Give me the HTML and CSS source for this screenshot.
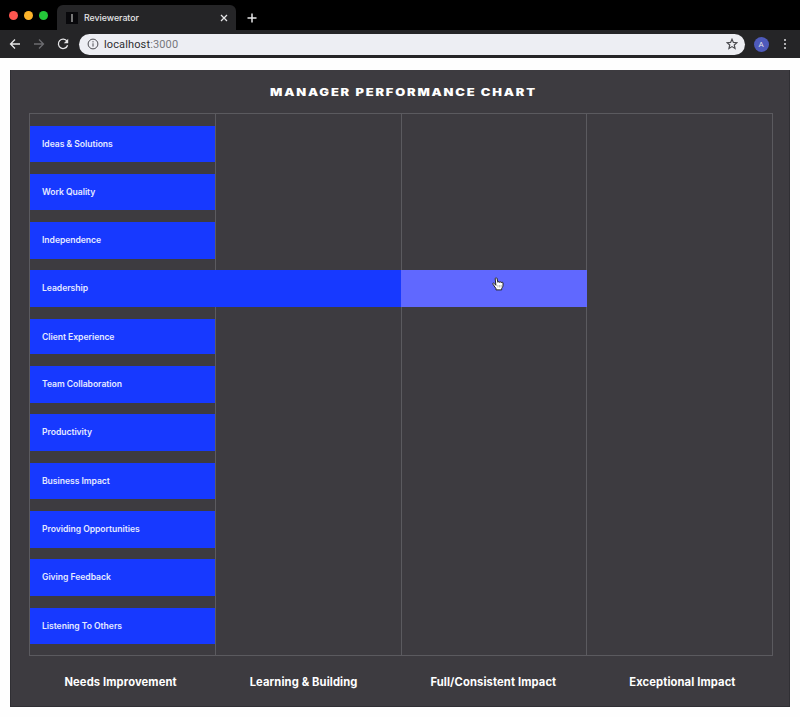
FILE: index.html
```html
<!DOCTYPE html>
<html lang="en">
<head>
<meta charset="utf-8">
<title>Reviewerator</title>
<link rel="stylesheet" href="styles.css">
</head>
<body>
<header class="browser">
  <div class="tab-strip">
    <div class="lights"><i class="light red"></i><i class="light amber"></i><i class="light green"></i></div>
    <div class="tab">
      <span class="favicon"></span>
      <span class="tab-title">Reviewerator</span>
      <svg class="close" viewBox="0 0 8 8"><path d="M1 1l6 6M7 1L1 7"/></svg>
    </div>
    <svg class="new-tab" viewBox="0 0 10 10"><path d="M5 .5v9M.5 5h9"/></svg>
  </div>
  <div class="toolbar">
    <svg class="nav" viewBox="0 0 12 12"><path d="M11 6H1.5M6 1.5L1.5 6 6 10.500"/></svg>
    <svg class="nav disabled" viewBox="0 0 12 12"><path d="M1 6h9.500M6 1.500L10.500 6 6 10.500"/></svg>
    <svg class="nav" viewBox="0 0 12 12"><path d="M10 3.200A4.700 4.700 0 1 0 10.600 7.200"/><path class="solid" d="M11.200.8v4.400H6.800z"/></svg>
    <div class="address">
      <svg class="info" viewBox="0 0 12 12"><circle cx="6" cy="6" r="4.900"/><path d="M6 5.300v3.300M6 3.200v1.200"/></svg>
      <span class="url">localhost<span class="port">:3000</span></span>
      <svg class="star" viewBox="0 0 12 12"><path d="M6 1.200l1.400 3.200 3.500.3-2.650 2.300.8 3.400L6 8.600l-3.050 1.800.8-3.400L1.100 4.700l3.500-.3z"/></svg>
    </div>
    <span class="avatar">A</span>
    <span class="menu"><i></i><i></i><i></i></span>
  </div>
</header>
<main class="panel">
  <h1 class="title"><span>MANAGER PERFORMANCE CHART</span></h1>
  <section class="chart">
    <div class="row"><div class="bar">Ideas &amp; Solutions</div></div>
    <div class="row"><div class="bar">Work Quality</div></div>
    <div class="row tall"><div class="bar">Independence</div></div>
    <div class="row tall"><div class="bar wide">Leadership</div><div class="bar hover"><svg class="cursor" viewBox="0 0 12 14"><path d="M3.900 8.300L2.400 6.600C1.300 5.500.2 6.300 1 7.300l3 4.300v1.300h5.700v-1.400c1-1.300 1.300-2.400 1.300-3.600V6c0-1-1.300-1-1.500-.2 0-1.200-1.500-1.200-1.800-.4-.2-1-1.600-1-1.800-.1L5 1.500C4.700.4 3 .7 3.200 1.900z"/><path class="creases" d="M5.900 8v2.500M7.600 8v2.500M9.200 8v2.500"/></svg></div></div>
    <div class="row short"><div class="bar">Client Experience</div></div>
    <div class="row tall"><div class="bar">Team Collaboration</div></div>
    <div class="row tall"><div class="bar">Productivity</div></div>
    <div class="row"><div class="bar">Business Impact</div></div>
    <div class="row tall"><div class="bar">Providing Opportunities</div></div>
    <div class="row tall"><div class="bar">Giving Feedback</div></div>
    <div class="row"><div class="bar">Listening To Others</div></div>
  </section>
  <footer class="levels">
    <span>Needs Improvement</span><span>Learning &amp; Building</span><span>Full/Consistent Impact</span><span>Exceptional Impact</span>
  </footer>
</main>
</body>
</html>
```
FILE: styles.css
```css
* { box-sizing: border-box; }
body { margin: 0; background: #fefefe; font-family: Inter, "Liberation Sans", sans-serif; }
svg { display: block; flex: none; fill: none; stroke: currentColor; }

.browser { height: 58px; background: #000; color: #e6e6e8; }
.tab-strip { display: flex; height: 30px; align-items: flex-end; }
.lights { display: flex; gap: 5.500px; width: 57px; height: 30px; padding: 10.500px 0 0 8.500px; }
.light { width: 9.500px; height: 9.500px; border-radius: 50%; }
.red { background: #fc5650; }
.amber { background: #fdb32a; }
.green { background: #24c839; }
.tab { display: flex; align-items: center; width: 179px; height: 25px; padding: 0 8px 0 9px; border-radius: 6px 6px 0 0; background: #252527; }
.favicon { width: 12px; height: 12px; margin-right: 6px; padding: 2px 5px; background: #08080b; }
.favicon::before { content: ""; display: block; width: 2px; height: 8px; background: #777; }
.tab-title { flex: 1; font-size: 8.800px; font-weight: 500; letter-spacing: -.02px; }
.close { width: 8px; height: 8px; stroke-width: 1.300; }
.new-tab { width: 10px; height: 10px; margin: 0 0 7px 11px; stroke-width: 1.500; }
.toolbar { display: flex; align-items: center; height: 28px; padding-left: 9px; background: #252527; }
.nav { width: 12px; height: 12px; margin-right: 12px; stroke-width: 1.300; }
.nav:nth-child(3) { margin-right: 10px; }
.disabled { color: #6c6c70; }
.solid { fill: currentColor; stroke: none; }
.address { display: flex; align-items: center; width: 666px; height: 21px; padding: 0 7px 0 8px; border-radius: 11px; background: #edeef3; color: #4b4b50; }
.info { width: 12px; height: 12px; margin-right: 5px; }
.url { flex: 1; font-family: Roboto, sans-serif; font-size: 11px; letter-spacing: .13px; color: #2d2d31; }
.port { color: #77777c; }
.star { width: 12px; height: 12px; stroke-width: 1.200; }
.avatar { width: 15px; height: 15px; margin-left: 8.500px; border-radius: 50%; background: #4e5abb; font: 8px/15px Roboto, sans-serif; text-align: center; }
.menu { display: grid; gap: 2px; margin-left: 15px; }
.menu i { width: 2px; height: 2px; border-radius: 1px; background: #dedee0; }

.panel { width: 780px; height: 637px; margin: 12px 0 0 10px; padding: 0 17px 0 19px; border: 1px solid #302f34; border-top: 0; background: #3d3b40; color: #fff; }
.title { height: 43px; margin: 0; padding-left: 4px; font-size: 10px; line-height: 45px; font-weight: 900; text-align: center; }
.title span { display: inline-block; letter-spacing: 1.400px; transform: scaleX(1.290); }
.chart { display: grid; grid-template-rows: 48px 48px 48px 49px 47px 48px 49px 48px 48px 49px 36px; width: 744px; height: 543px; margin-left: -1px; padding: 12px 0; border: 1px solid #5b5a5f; background: linear-gradient(90deg, transparent 185px, #5b5a5f 185px 186px, transparent 186px 371px, #5b5a5f 371px 372px, transparent 372px 556px, #5b5a5f 556px 557px, transparent 557px); }
.row { display: flex; height: 36px; }
.row.tall { height: 37px; }
.row.short { height: 35px; }
.row.short .bar { padding-bottom: 0; }
.bar { width: 185px; padding: 0 0 1px 12px; display: flex; align-items: center; background: #1739ff; color: #e5eaff; font-size: 8.600px; font-weight: 600; letter-spacing: -.04px; }
.wide { width: 371px; }
.hover { width: 186px; padding: 0 0 9px 91px; background: #6068ff; }
.cursor { width: 12px; height: 14px; fill: #fff; stroke: #222; stroke-width: 1; }
.creases { stroke: #888; stroke-width: .6; }
.levels { display: flex; justify-content: space-around; width: 744px; height: 51px; margin-left: -2px; line-height: 52px; font-size: 11.200px; font-weight: 700; letter-spacing: .12px; }
```
